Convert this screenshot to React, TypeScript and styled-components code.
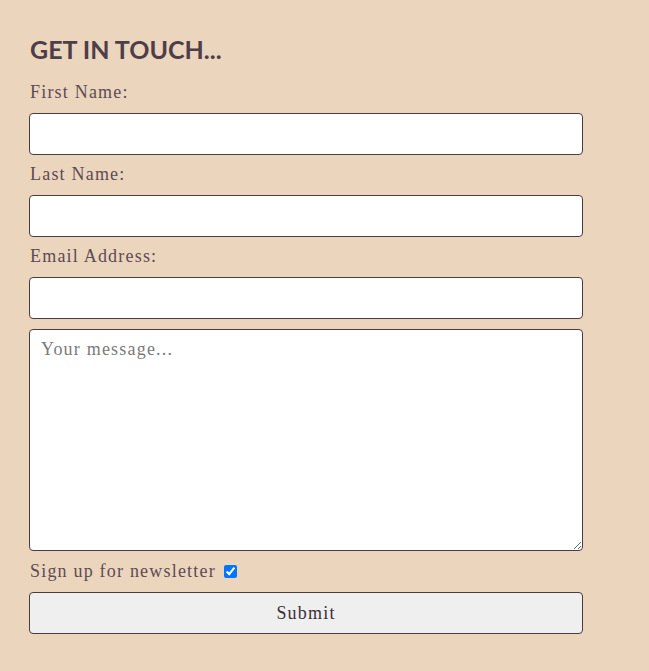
import React from "react";
import styled, { createGlobalStyle } from "styled-components";

const Global = createGlobalStyle`
  html, body { margin: 0; padding: 0; background: #ebd5bd; }
  body { font-family: "Liberation Serif", serif; }
`;

const Page = styled.div`
  width: 649px;
  min-height: 671px;
  background: #ebd5bd;
  box-sizing: border-box;
  padding: 33px 66px 0 29px;
`;

const Heading = styled.h2`
  margin: 0 0 16px 1px;
  font-family: "Lato", sans-serif;
  font-weight: 700;
  font-size: 25px;
  line-height: 32px;
  color: #4f3e49;
`;

const Form = styled.form`
  display: flex;
  flex-direction: column;
`;

const Label = styled.label`
  display: block;
  font-size: 18px;
  line-height: 22px;
  letter-spacing: 1.2px;
  color: #5e4b54;
  margin: 0 0 10px 1px;
`;

const TextInput = styled.input`
  box-sizing: border-box;
  width: 554px;
  height: 42px;
  border: 1px solid #4b3b42;
  border-radius: 4px;
  background: #fff;
  margin: 0 0 8px 0;
  padding: 0 10px;
  font-family: inherit;
  font-size: 18px;
`;

const Message = styled.textarea`
  box-sizing: border-box;
  width: 554px;
  height: 222px;
  border: 1px solid #4b3b42;
  border-radius: 4px;
  background: #fff;
  margin: 2px 0 9px 0;
  padding: 9px 11px;
  font-family: inherit;
  font-size: 18px;
  letter-spacing: 1.2px;
  color: #333;
  resize: vertical;
  &::placeholder { color: #7a7a7a; }
`;

const CheckRow = styled.label`
  display: flex;
  align-items: center;
  gap: 8px;
  height: 22px;
  font-size: 18px;
  letter-spacing: 1.2px;
  color: #5e4b54;
  margin: 0 0 10px 1px;
`;

const Check = styled.input`
  margin: 0;
  width: 13px;
  height: 13px;
`;

const Submit = styled.button`
  box-sizing: border-box;
  width: 554px;
  height: 42px;
  border: 1px solid #4b3b42;
  border-radius: 4px;
  background: #efefef;
  font-family: inherit;
  font-size: 18px;
  letter-spacing: 1.2px;
  color: #3a3035;
`;

export default function App() {
  return (
    <>
      <Global />
      <Page>
        <Heading>GET IN TOUCH...</Heading>
        <Form onSubmit={(e) => e.preventDefault()}>
          <Label htmlFor="fn">First Name:</Label>
          <TextInput id="fn" type="text" />
          <Label htmlFor="ln">Last Name:</Label>
          <TextInput id="ln" type="text" />
          <Label htmlFor="em">Email Address:</Label>
          <TextInput id="em" type="email" />
          <Message placeholder="Your message..." />
          <CheckRow>
            Sign up for newsletter
            <Check type="checkbox" defaultChecked />
          </CheckRow>
          <Submit type="submit">Submit</Submit>
        </Form>
      </Page>
    </>
  );
}
